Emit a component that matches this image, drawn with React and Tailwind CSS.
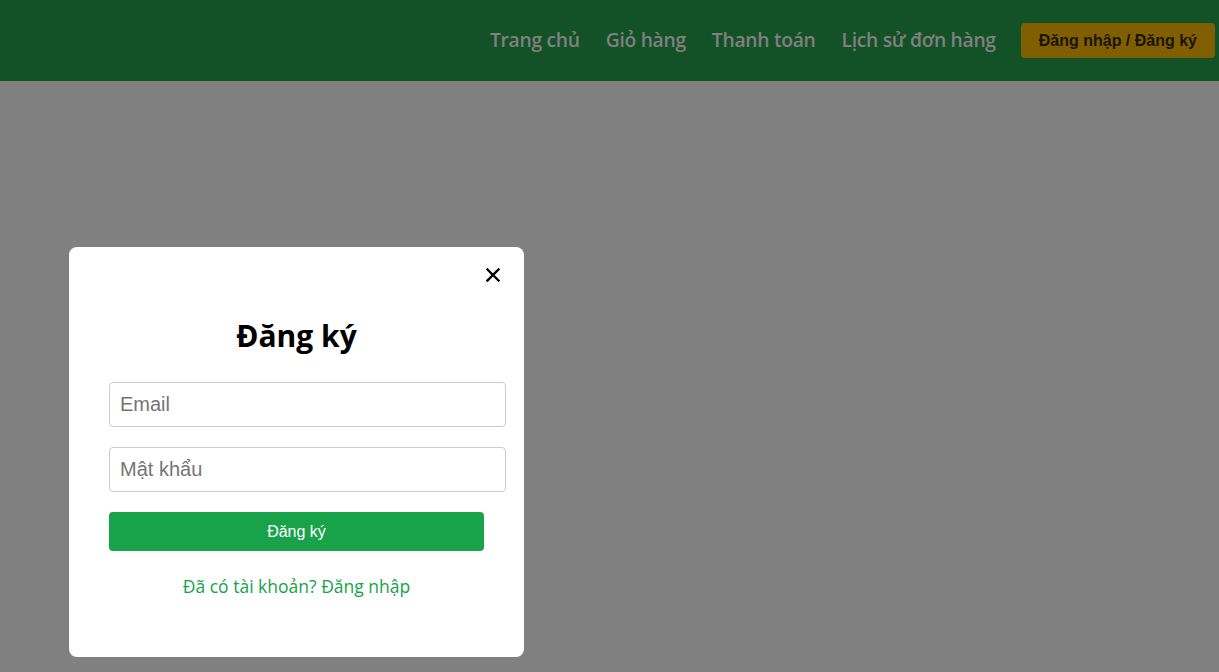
import React from 'react'

const navLinks = ['Trang chủ', 'Giỏ hàng', 'Thanh toán', 'Lịch sử đơn hàng']

const App = () => {
  return (
    <div className="min-h-screen bg-[#808080] font-['Open_Sans',sans-serif]">
      <header className="h-[81px] bg-[#135227] flex items-center justify-end gap-[26px] pr-[4px]">
        {navLinks.map((label) => (
          <a key={label} href="#" className="text-[19.3px] font-semibold text-[#808080] tracking-[-0.3px]">
            {label}
          </a>
        ))}
        <button className="ml-[-1px] h-[35px] px-[18px] rounded-[4px] bg-[#7f5f00] text-[#1a1400] text-[16px] font-bold font-['Liberation_Sans',Arial,sans-serif]">
          Đăng nhập / Đăng ký
        </button>
      </header>

      <main className="pt-[166px] pl-[69px] pb-[15px]">
        <div className="w-[455px] h-[410px] bg-white rounded-[8px] px-[40px] pt-[19px]">
          <div className="flex justify-end -mr-[18px]">
            <button className="w-[18px] h-[18px] flex items-center justify-center">
              <svg width="14" height="14" viewBox="0 0 14 14">
                <path d="M1.5 1.5 L12.5 12.5 M12.5 1.5 L1.5 12.5" stroke="#000" strokeWidth="2.4" strokeLinecap="square" />
              </svg>
            </button>
          </div>
          <h2 className="mt-[32px] text-center text-[30px] font-bold text-black leading-[40px]">Đăng ký</h2>
          <form className="mt-[26px] flex flex-col font-['Liberation_Sans',Arial,sans-serif]">
            <input
              type="email"
              placeholder="Email"
              className="w-[397px] h-[45px] px-[10px] border border-[#cccccc] rounded-[4px] text-[20px] placeholder:text-[#757575] outline-none"
            />
            <input
              type="password"
              placeholder="Mật khẩu"
              className="mt-[20px] w-[397px] h-[45px] px-[10px] border border-[#cccccc] rounded-[4px] text-[20px] placeholder:text-[#757575] outline-none"
            />
            <button
              type="button"
              className="mt-[20px] w-[375px] h-[39px] rounded-[4px] bg-[#18a34a] text-white text-[16px]"
            >
              Đăng ký
            </button>
          </form>
          <p className="mt-[22px] w-[375px] text-center text-[17.5px] text-[#16a34a]">
            Đã có tài khoản? Đăng nhập
          </p>
        </div>
      </main>
    </div>
  )
}

export default App
